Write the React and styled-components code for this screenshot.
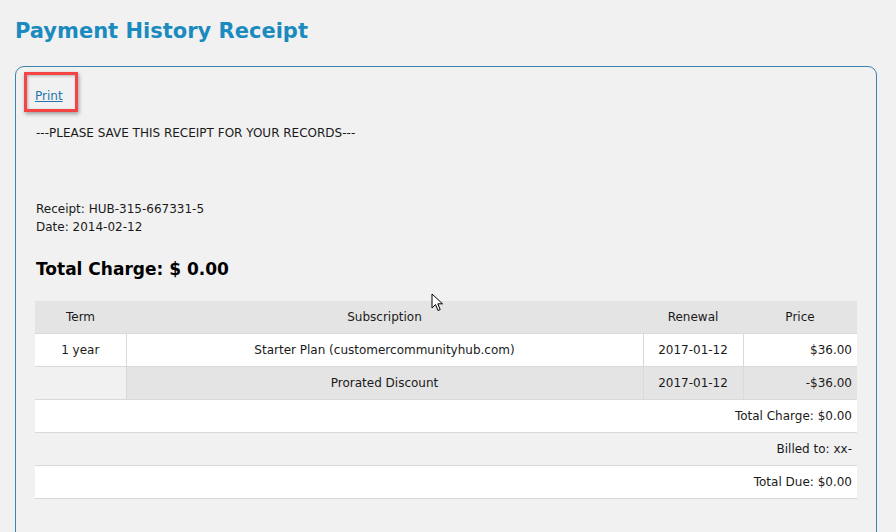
import React from 'react';
import styled, { createGlobalStyle } from 'styled-components';

const GlobalStyle = createGlobalStyle`
  html, body {
    margin: 0;
    padding: 0;
    background: #f1f1f1;
    font-family: "DejaVu Sans", Verdana, sans-serif;
    color: #1a1a1a;
  }
`;

const Page = styled.div`
  width: 896px;
  height: 532px;
  overflow: hidden;
  padding: 18px 19px 0 15px;
  box-sizing: border-box;
  position: relative;
`;

const Title = styled.h1`
  margin: 0 0 21px 0;
  font-size: 21px;
  line-height: 27px;
  font-weight: bold;
  color: #1b8bbf;
`;

const Panel = styled.div`
  border: 1px solid #3b84ab;
  border-radius: 9px;
  padding: 18px 19px 40px 19px;
  min-height: 480px;
`;

const PrintWrap = styled.div`
  position: relative;
  display: inline-block;
`;

const PrintLink = styled.a`
  font-size: 12px;
  color: #2477ad;
  text-decoration: underline;
  cursor: pointer;
`;

const Highlight = styled.span`
  position: absolute;
  box-sizing: border-box;
  left: -11px;
  top: -13px;
  width: 54px;
  height: 40px;
  border: 3px solid #f24545;
  box-shadow: 1px 2px 4px rgba(0, 0, 0, 0.35), inset 1px 1px 3px rgba(0, 0, 0, 0.25);
  pointer-events: none;
`;

const Text = styled.p`
  margin: ${(p) => p.$mt || 0}px 0 0 1px;
  font-size: 12px;
  line-height: 18px;
`;

const Total = styled.h2`
  margin: 22px 0 21px 1px;
  font-size: 17px;
  line-height: 22px;
  font-weight: bold;
  color: #000;
`;

const Table = styled.table`
  width: 822px;
  border-collapse: collapse;
  font-size: 12px;
`;

const Row = styled.tr`
  height: 32px;
  background: ${(p) => (p.$shade === 'dark' ? '#e4e4e4' : p.$shade === 'none' ? 'transparent' : '#ffffff')};
  border-bottom: 1px solid #d9d9d9;
`;

const Cell = styled.td`
  padding: 0 5px;
  height: 32px;
  text-align: ${(p) => p.$align || 'center'};
  border-left: ${(p) => (p.$line ? '1px solid #d9d9d9' : 'none')};
  background: ${(p) => (p.$clear ? '#f1f1f1' : 'inherit')};
  width: ${(p) => p.$w || 'auto'};
  white-space: nowrap;
`;

const HeadCell = styled.th`
  padding: 0 5px;
  height: 32px;
  font-weight: normal;
  text-align: center;
  width: ${(p) => p.$w || 'auto'};
`;

const Cursor = styled.svg`
  position: absolute;
  left: 431px;
  top: 293px;
`;

export default function App() {
  return (
    <>
      <GlobalStyle />
      <Page>
        <Title>Payment History Receipt</Title>
        <Panel>
          <PrintWrap>
            <PrintLink>Print</PrintLink>
            <Highlight />
          </PrintWrap>
          <Text $mt={20}>---PLEASE SAVE THIS RECEIPT FOR YOUR RECORDS---</Text>
          <Text $mt={58}>Receipt: HUB-315-667331-5</Text>
          <Text>Date: 2014-02-12</Text>
          <Total>Total Charge: $ 0.00</Total>
          <Table>
            <thead>
              <Row $shade="dark">
                <HeadCell $w="81px">Term</HeadCell>
                <HeadCell>Subscription</HeadCell>
                <HeadCell $w="90px">Renewal</HeadCell>
                <HeadCell $w="104px">Price</HeadCell>
              </Row>
            </thead>
            <tbody>
              <Row>
                <Cell>1 year</Cell>
                <Cell $line>Starter Plan (customercommunityhub.com)</Cell>
                <Cell $line>2017-01-12</Cell>
                <Cell $line $align="right">$36.00</Cell>
              </Row>
              <Row $shade="dark">
                <Cell $clear />
                <Cell $line>Prorated Discount</Cell>
                <Cell $line>2017-01-12</Cell>
                <Cell $line $align="right">-$36.00</Cell>
              </Row>
              <Row>
                <Cell colSpan={4} $align="right">Total Charge: $0.00</Cell>
              </Row>
              <Row $shade="none">
                <Cell colSpan={4} $align="right">Billed to: xx-</Cell>
              </Row>
              <Row>
                <Cell colSpan={4} $align="right">Total Due: $0.00</Cell>
              </Row>
            </tbody>
          </Table>
        </Panel>
        <Cursor width="14" height="20" viewBox="0 0 14 20">
          <path d="M1 1 L1 15 L4.5 11.5 L7 17.5 L9.2 16.6 L6.8 10.8 L11.5 10.8 Z" fill="#fff" stroke="#000" strokeWidth="1" strokeLinejoin="round" />
        </Cursor>
      </Page>
    </>
  );
}
